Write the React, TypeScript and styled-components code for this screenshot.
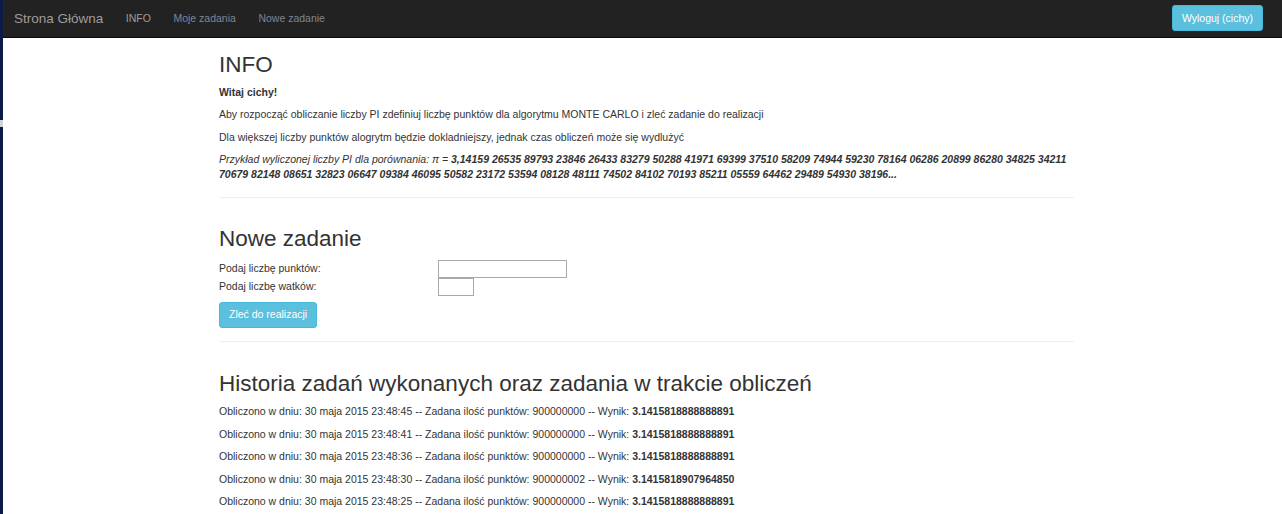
import styled, { createGlobalStyle } from "styled-components";

const GlobalStyle = createGlobalStyle`
    html, body {
        margin: 0;
        padding: 0;
        background: #fff;
    }

    body {
        font-family: "Liberation Sans", Arial, sans-serif;
        font-size: 10.5px;
        line-height: 15px;
        color: #333;
    }
`;

const Screen = styled.div`
    display: flex;
    min-height: 514px;
`;

const Edge = styled.div`
    flex: 0 0 3px;
    background: linear-gradient(
        to bottom,
        #0c1a48 0 120px,
        #cfd3dc 120px 127px,
        #0c1a48 127px
    );
`;

const Page = styled.div`
    flex: 1;
    min-width: 0;
`;

const Navbar = styled.nav`
    display: flex;
    align-items: center;
    height: 37.5px;
    padding: 0 19px 0 0;
    background: #222;
    border-bottom: 0.75px solid #080808;
    box-sizing: border-box;
`;

const Brand = styled.a`
    font-size: 13.5px;
    line-height: 15px;
    color: #9d9d9d;
    padding: 11.25px 11.25px 11.25px 11px;
    text-decoration: none;
`;

const NavList = styled.ul`
    display: flex;
    list-style: none;
    margin: 0;
    padding: 0;
    flex: 1;
`;

const NavLink = styled.a<{ $active?: boolean }>`
    display: block;
    padding: 11.25px;
    line-height: 15px;
    color: ${(p) => (p.$active ? "#9d9d9d" : "#7c8796")};
    text-decoration: none;
`;

const Button = styled.button`
    font-family: inherit;
    font-size: 10.5px;
    line-height: 15px;
    padding: 4.5px 9px;
    color: #fff;
    background: #5bc0de;
    border: 1px solid #46b8da;
    border-radius: 3px;
    cursor: pointer;
`;

const Main = styled.main`
    padding-left: 8px;
`;

const Container = styled.div`
    width: 855px;
    margin: 0 auto;
    padding-top: 15px;
`;

const H2 = styled.h2`
    font-size: 22.5px;
    font-weight: 500;
    line-height: 1.1;
    margin: 0 0 7.5px;
    color: #333;
`;

const Section = styled.section`
    display: flex;
    flex-direction: column;
`;

const P = styled.p`
    margin: 0 0 7.5px;
`;

const Hr = styled.hr<{ $top?: number; $bottom?: number }>`
    width: 100%;
    margin: ${(p) => p.$top ?? 7.5}px 0 ${(p) => p.$bottom ?? 29}px;
    border: 0;
    border-top: 1px solid #eee;
`;

const FormTable = styled.table`
    border-collapse: collapse;
    border-spacing: 0;
`;

const LabelCell = styled.td`
    width: 219px;
    padding: 0;
    vertical-align: middle;
`;

const InputCell = styled.td`
    padding: 0;
    height: 18px;
    vertical-align: middle;
`;

const Input = styled.input<{ $w: number }>`
    display: block;
    box-sizing: border-box;
    width: ${(p) => p.$w}px;
    height: 18px;
    border: 1px solid #a9a9a9;
    padding: 0 2px;
    font-size: 10px;
    font-family: inherit;
`;

const SubmitButton = styled(Button)`
    align-self: flex-start;
    margin-top: 6px;
`;

const HistoryRow = styled(P)``;

const history = [
    { time: "23:48:45", points: "900000000", result: "3.1415818888888891" },
    { time: "23:48:41", points: "900000000", result: "3.1415818888888891" },
    { time: "23:48:36", points: "900000000", result: "3.1415818888888891" },
    { time: "23:48:30", points: "900000002", result: "3.1415818907964850" },
    { time: "23:48:25", points: "900000000", result: "3.1415818888888891" },
];

const PI_DIGITS =
    "3,14159 26535 89793 23846 26433 83279 50288 41971 69399 37510 58209 74944 59230 78164 06286 20899 86280 34825 34211 70679 82148 08651 32823 06647 09384 46095 50582 23172 53594 08128 48111 74502 84102 70193 85211 05559 64462 29489 54930 38196...";

const App = () => {
    return (
        <>
            <GlobalStyle />
            <Screen>
                <Edge />
                <Page>
                    <Navbar>
                        <Brand href="#">Strona Główna</Brand>
                        <NavList>
                            <li>
                                <NavLink href="#" $active>
                                    INFO
                                </NavLink>
                            </li>
                            <li>
                                <NavLink href="#">Moje zadania</NavLink>
                            </li>
                            <li>
                                <NavLink href="#">Nowe zadanie</NavLink>
                            </li>
                        </NavList>
                        <Button>Wyloguj (cichy)</Button>
                    </Navbar>

                    <Main>
                        <Container>
                            <Section>
                                <H2>INFO</H2>
                                <P>
                                    <strong>Witaj cichy!</strong>
                                </P>
                                <P>
                                    Aby rozpocząć obliczanie liczby PI zdefiniuj liczbę punktów dla
                                    algorytmu MONTE CARLO i zleć zadanie do realizacji
                                </P>
                                <P>
                                    Dla większej liczby punktów alogrytm będzie dokladniejszy, jednak
                                    czas obliczeń może się wydlużyć
                                </P>
                                <P>
                                    <em>
                                        Przykład wyliczonej liczby PI dla porównania: π ={" "}
                                        <b>{PI_DIGITS}</b>
                                    </em>
                                </P>
                                <Hr />
                            </Section>

                            <Section>
                                <H2>Nowe zadanie</H2>
                                <FormTable>
                                    <tbody>
                                        <tr>
                                            <LabelCell>Podaj liczbę punktów:</LabelCell>
                                            <InputCell>
                                                <Input type="text" $w={129} />
                                            </InputCell>
                                        </tr>
                                        <tr>
                                            <LabelCell>Podaj liczbę watków:</LabelCell>
                                            <InputCell>
                                                <Input type="text" $w={36} />
                                            </InputCell>
                                        </tr>
                                    </tbody>
                                </FormTable>
                                <SubmitButton>Zleć do realizacji</SubmitButton>
                                <Hr $top={13.5} $bottom={30} />
                            </Section>

                            <Section>
                                <H2>Historia zadań wykonanych oraz zadania w trakcie obliczeń</H2>
                                {history.map((row) => (
                                    <HistoryRow key={row.time}>
                                        Obliczono w dniu: 30 maja 2015 {row.time} -- Zadana ilość
                                        punktów: {row.points} -- Wynik: <b>{row.result}</b>
                                    </HistoryRow>
                                ))}
                            </Section>
                        </Container>
                    </Main>
                </Page>
            </Screen>
        </>
    );
};

export default App;
